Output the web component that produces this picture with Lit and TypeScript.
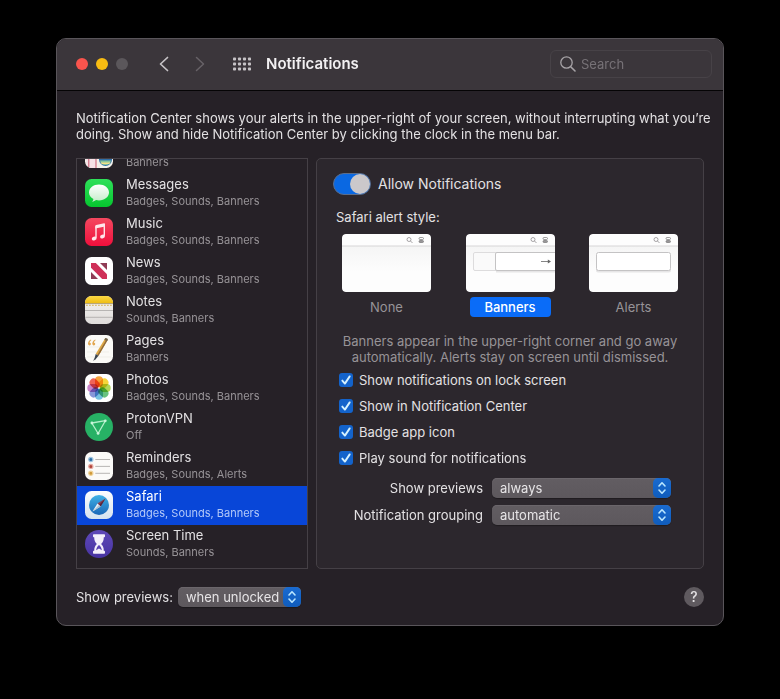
import { LitElement, html, css, svg, nothing, TemplateResult } from "lit";
import { customElement, property, state } from "lit/decorators.js";
import { classMap } from "lit/directives/class-map.js";

interface AppEntry {
  id: string;
  name: string;
  detail: string;
}

const APPS: AppEntry[] = [
  { id: "maps", name: "", detail: "Banners" },
  { id: "messages", name: "Messages", detail: "Badges, Sounds, Banners" },
  { id: "music", name: "Music", detail: "Badges, Sounds, Banners" },
  { id: "news", name: "News", detail: "Badges, Sounds, Banners" },
  { id: "notes", name: "Notes", detail: "Sounds, Banners" },
  { id: "pages", name: "Pages", detail: "Banners" },
  { id: "photos", name: "Photos", detail: "Badges, Sounds, Banners" },
  { id: "protonvpn", name: "ProtonVPN", detail: "Off" },
  { id: "reminders", name: "Reminders", detail: "Badges, Sounds, Alerts" },
  { id: "safari", name: "Safari", detail: "Badges, Sounds, Banners" },
  { id: "screentime", name: "Screen Time", detail: "Sounds, Banners" },
];

const PETALS = ["#f7941d", "#f3cf1a", "#a5cf3b", "#4fb86a", "#5fb8dc", "#7386d2", "#c06fc0", "#ee4b3c"];

const gradient = (id: string, from: string, to: string) => svg`
  <linearGradient id=${id} x1="0" y1="0" x2="0" y2="1">
    <stop offset="0" stop-color=${from}></stop>
    <stop offset="1" stop-color=${to}></stop>
  </linearGradient>`;

const tile = (fill: string) => svg`<rect width="28" height="28" rx="6.5" fill=${fill}></rect>`;

const ICONS: Record<string, () => TemplateResult> = {
  maps: () => svg`
    ${tile("#f3f1ea")}
    <path d="M1 18h10v10H6.500A6.500 6.500 0 0 1 1 24z" fill="#f6e3e7"></path>
    <path d="M3.800 18v9M11 18v10" stroke="#c9566c" stroke-width="1"></path>
    <circle cx="20.500" cy="19.500" r="6.500" fill="#2f6fa8"></circle>
    <path d="M15 20.500h11a5.600 5.600 0 0 1-11 0z" fill="#8cc79a"></path>
    <path d="M15.500 22.500h10a5.600 5.600 0 0 1-1.500 1.500h-7z" fill="#f2e08b"></path>`,
  messages: () => svg`
    <defs>${gradient("msg", "#2fe05a", "#06c62f")}${gradient("bub", "#ffffff", "#c4ecc9")}</defs>
    ${tile("url(#msg)")}
    <path d="M14 5.600c5.600 0 10 3.500 10 7.900s-4.400 7.900-10 7.900c-1 0-2-.1-2.900-.3-1 .9-2.400 1.500-4 1.700.8-.8 1.200-1.700 1.300-2.800C5.700 18.600 4 16.200 4 13.500c0-4.400 4.400-7.900 10-7.900z" fill="url(#bub)"></path>`,
  music: () => svg`
    <defs>${gradient("mus", "#f4485f", "#f00f3c")}</defs>
    ${tile("url(#mus)")}
    <path d="M11 8.200v11.600M19.300 6.500v11.300" stroke="#ffe6ea" stroke-width="1.400" fill="none"></path>
    <path d="M10.300 8c0-.6.3-1 .9-1.100l7.900-1.700c.6-.1.9.2.9.8v2.500l-9.700 2z" fill="#ffe6ea"></path>
    <ellipse cx="9.200" cy="20.500" rx="2.500" ry="1.900" transform="rotate(-18 9.200 20.500)" fill="#ffe6ea"></ellipse>
    <ellipse cx="17.500" cy="18.500" rx="2.500" ry="1.900" transform="rotate(-18 17.500 18.500)" fill="#ffe6ea"></ellipse>`,
  news: () => svg`
    ${tile("#ffffff")}
    <path d="M6 6h4.800L22 17.200V22h-4.800L6 10.800z" fill="#cf3058"></path>
    <path d="M15 6h7v7z" fill="#8f3b55"></path>
    <path d="M6 15v7h7z" fill="#8f3b55"></path>`,
  notes: () => svg`
    <defs>${gradient("note", "#f6f4f1", "#dfdcdb")}${gradient("noteTop", "#fbd845", "#efbd12")}</defs>
    ${tile("url(#note)")}
    <path d="M0 7.300V6.500A6.500 6.500 0 0 1 6.500 0h15A6.500 6.500 0 0 1 28 6.500v.8z" fill="url(#noteTop)"></path>
    <path d="M0 7.600h28" stroke="#96824c" stroke-width=".7"></path>
    <path d="M1 9.300h26" stroke="#d3ad4b" stroke-width=".9" stroke-dasharray="1.800 1.200"></path>
    <path d="M0 14.500h28M0 21.300h28" stroke="#aaa7a6" stroke-width=".8"></path>`,
  pages: () => svg`
    ${tile("#fbfaf7")}
    <path d="M2 12h17M2 17h22M2 22h24" stroke="#ece9e3" stroke-width=".7"></path>
    <path d="M6 4.500C4 5.500 3 7 3 8.600c0 1.100.6 1.800 1.500 1.800.8 0 1.400-.6 1.400-1.300 0-.8-.5-1.300-1.300-1.300.1-1 .7-1.800 1.700-2.500zM10.300 4.500c-2 1-3 2.500-3 4.100 0 1.100.6 1.800 1.500 1.800.8 0 1.400-.6 1.400-1.300 0-.8-.5-1.300-1.300-1.300.1-1 .7-1.800 1.700-2.500z" fill="#e2a750"></path>
    <path d="M20.200 3.200l2.600 1.500-9.300 16-2.800-1.600z" fill="#dda845"></path>
    <path d="M21.700 4.100l1.100.6-9.300 16-1.200-.7z" fill="#8f6a3c"></path>
    <path d="M20.200 3.200c.5-.9 3.200.6 2.600 1.500l-.9 1.500-2.600-1.500z" fill="#77684f"></path>
    <path d="M10.700 19.100l2.800 1.600-3.300 4.100c-.4.400-1 .1-.9-.5z" fill="#39434e"></path>
    <path d="M8.700 25.500l1.300-2.200" stroke="#39434e" stroke-width=".8"></path>`,
  photos: () => svg`
    ${tile("#ffffff")}
    <g class="petals">
      ${PETALS.map(
        (color, i) => svg`
        <rect x="10" y="2.300" width="8" height="10.900" rx="4" fill=${color} fill-opacity=".86"
          transform="rotate(${i * 45} 14 14)"></rect>`
      )}
    </g>`,
  protonvpn: () => svg`
    <circle cx="14" cy="14" r="14" fill="#27b165"></circle>
    <path d="M6.800 10l13.600-2.300-7.300 12.800z" fill="none" stroke="#b4efca" stroke-width="1.300" stroke-linejoin="round"></path>
    <circle cx="6.900" cy="10" r="1.400" fill="#c9f5da"></circle>
    <circle cx="20.300" cy="7.800" r="1.400" fill="#c9f5da"></circle>
    <circle cx="13.100" cy="20.400" r="1.400" fill="#c9f5da"></circle>`,
  reminders: () => svg`
    ${tile("#fbfaf8")}
    <circle cx="5.800" cy="7.500" r="2.100" fill="#2c6ca4" stroke="#9dc3df" stroke-width="1.200"></circle>
    <circle cx="5.800" cy="14.400" r="2.100" fill="#b0453a" stroke="#e6aaa2" stroke-width="1.200"></circle>
    <circle cx="5.800" cy="21.300" r="2.100" fill="#d09a3a" stroke="#efd39a" stroke-width="1.200"></circle>
    <path d="M10.300 7.500h14.700M10.300 14.400h14.700M10.300 21.300h14.700" stroke="#b0aeac" stroke-width=".9"></path>`,
  safari: () => svg`
    <defs>${gradient("saf", "#3fb2e6", "#1b67b8")}${gradient("safTile", "#fbfdff", "#d5e2ef")}</defs>
    ${tile("url(#safTile)")}
    <circle cx="14" cy="14" r="10" fill="url(#saf)"></circle>
    <path d="M20.500 7.500l-4.900 8.100-3.200-3.200z" fill="#8d3f52"></path>
    <path d="M20.500 7.500l-4.900 8.100-1.600-1.600z" fill="#52283f"></path>
    <path d="M7.500 20.500l4.900-8.100 3.200 3.200z" fill="#e6eff6"></path>
    <path d="M7.500 20.500l6.500-6.500 1.600 1.600z" fill="#aebfd0"></path>`,
  screentime: () => svg`
    <defs>${gradient("scr", "#5f49b8", "#4733a2")}</defs>
    <circle cx="14" cy="14" r="14" fill="url(#scr)"></circle>
    <path d="M9 4.200h10c.6 0 1 .4 1 1v1c0 .6-.4 1-1 1h-.2c0 3.200-1 5.200-2.700 6.800 1.700 1.600 2.700 3.600 2.700 6.800h.2c.6 0 1 .4 1 1v1c0 .6-.4 1-1 1H9c-.6 0-1-.4-1-1v-1c0-.6.4-1 1-1h.2c0-3.200 1-5.200 2.700-6.800-1.700-1.600-2.700-3.600-2.700-6.800H9c-.6 0-1-.4-1-1v-1c0-.6.4-1 1-1z" fill="#f4f0fb"></path>
    <path d="M14 15c1.600 1.300 2.600 3 2.900 5.300L14 18.500l-2.900 1.800c.3-2.300 1.300-4 2.900-5.300z" fill="#5a42b4"></path>`,
};

@customElement("app-icon")
export class AppIcon extends LitElement {
  @property() name = "";

  static styles = css`
    :host {
      display: block;
      width: 28px;
      height: 28px;
    }
    .icon {
      display: block;
      width: 100%;
      height: 100%;
    }
    .petals rect {
      mix-blend-mode: multiply;
    }
  `;

  render() {
    return html`<svg class="icon" viewBox="0 0 28 28" aria-hidden="true">${ICONS[this.name]?.() ?? nothing}</svg>`;
  }
}

@customElement("popup-menu")
export class PopupMenu extends LitElement {
  @property() label = "";
  @property({ type: Array }) options: string[] = [];

  static styles = css`
    :host {
      display: contents;
    }
    .label {
      text-align: right;
    }
    .field {
      display: grid;
      height: 20px;
      border-radius: 5px;
      background: linear-gradient(#625d62, #5d585d);
      box-shadow: 0 1px 1px rgba(0, 0, 0, 0.3), inset 0 1px 0 #6b666b;
    }
    .select,
    .stepper {
      grid-area: 1 / 1;
    }
    .select {
      appearance: none;
      width: 100%;
      min-width: 0;
      margin: 0;
      padding: 0 18px 1px 8px;
      border: 0;
      border-radius: 5px;
      background: transparent;
      color: #e6e4e6;
      font: inherit;
      line-height: 16px;
    }
    .select option {
      color: #222;
    }
    .stepper {
      justify-self: end;
      width: 18px;
      height: 20px;
      border-radius: 5px;
      background: linear-gradient(#1a6bd0, #0f5cbc);
      pointer-events: none;
    }
  `;

  render() {
    return html`
      <label class="label" for="menu">${this.label}</label>
      <span class="field">
        <select id="menu" class="select">
          ${this.options.map((o) => html`<option>${o}</option>`)}
        </select>
        <svg class="stepper" viewBox="0 0 18 20" aria-hidden="true">
          <path d="M6 8l3-3.200L12 8M6 12l3 3.200L12 12" fill="none" stroke="#b9e6ff" stroke-width="1.600"
            stroke-linecap="round" stroke-linejoin="round"></path>
        </svg>
      </span>
    `;
  }
}

@customElement("app-root")
export class AppRoot extends LitElement {
  @state() private selected = "safari";
  @state() private alertStyle = "Banners";

  static styles = css`
    :host {
      display: block;
      box-sizing: border-box;
      min-height: 100vh;
      padding: 38px 56px;
      background: #000;
      color: #e3e1e3;
      font: 13px/16px Inter, "Liberation Sans", sans-serif;
    }
    * {
      box-sizing: border-box;
    }
    button,
    input {
      margin: 0;
      padding: 0;
      border: 0;
      background: none;
      color: inherit;
      font: inherit;
    }
    .window {
      overflow: hidden;
      border: 1px solid #59555a;
      border-radius: 10px;
      background: #262127;
    }
    .titlebar {
      display: flex;
      align-items: center;
      height: 52px;
      padding: 0 11px 1px 19px;
      border-bottom: 1px solid #050405;
      background: #3b363b;
    }
    .lights {
      display: flex;
      gap: 8px;
      margin-right: 22px;
    }
    .light {
      width: 12px;
      height: 12px;
      border-radius: 50%;
    }
    .close {
      background: #f9544d;
    }
    .minimise {
      background: #f8bc12;
    }
    .zoom {
      background: #5b575b;
    }
    .nav {
      display: flex;
      gap: 8px;
      margin-right: 14px;
    }
    .tool {
      display: grid;
      place-items: center;
      width: 28px;
      height: 28px;
      color: #c6c3c6;
    }
    .tool:disabled {
      color: #676267;
    }
    .title {
      flex: 1;
      margin: 0 0 0 10px;
      color: #f2f0f2;
      font-size: 15px;
      font-weight: 600;
      line-height: 20px;
    }
    .search {
      display: flex;
      align-items: center;
      gap: 5px;
      width: 162px;
      height: 28px;
      padding: 0 9px;
      border: 1px solid #474247;
      border-radius: 6px;
      color: #a7a3a7;
    }
    .search-input {
      flex: 1;
      min-width: 0;
      outline: none;
    }
    .search-input::placeholder {
      color: #777277;
      opacity: 1;
    }
    .body {
      padding: 19px 19px 18px;
    }
    .intro {
      margin: 0 -16px 16px 0;
    }
    .columns {
      display: grid;
      grid-template-columns: 58fr 97fr;
      gap: 8px;
    }
    .apps {
      contain: size;
      display: flex;
      flex-direction: column;
      justify-content: flex-end;
      overflow: hidden;
      margin: 0;
      padding: 0 0 4px;
      border: 1px solid #454046;
      list-style: none;
    }
    .entry {
      flex: none;
    }
    .row {
      display: flex;
      align-items: flex-start;
      gap: 13px;
      width: 100%;
      height: 39px;
      padding: 5px 8px 0;
      text-align: left;
    }
    .row.on {
      background: #0846d8;
      color: #fff;
    }
    .texts {
      display: grid;
      grid-template-rows: 16px 16px;
      margin-top: -3px;
    }
    .detail {
      grid-row: 2;
      color: #979397;
      font-size: 11px;
      line-height: 18px;
    }
    .on .detail {
      color: #b3c9f8;
    }
    .panel {
      padding: 14px 0 43px;
      border: 1px solid #454046;
      border-radius: 5px;
      background: #2c272d;
    }
    .allow {
      display: flex;
      align-items: center;
      gap: 7px;
      padding-left: 16px;
      font-size: 14px;
    }
    .switch {
      appearance: none;
      display: flex;
      width: 38px;
      height: 22px;
      border: 1px solid #5a6d8c;
      border-radius: 11px;
      background: #56525a;
    }
    .switch::before {
      content: "";
      width: 20px;
      height: 100%;
      border-radius: 10px;
      background: #cbc8cb;
    }
    .switch:checked {
      justify-content: flex-end;
      background: #0a68e2;
    }
    .styles {
      margin: 0;
      padding: 0 25px;
      border: 0;
    }
    .legend {
      margin-left: -6px;
      padding: 14px 0 9px;
    }
    .choices {
      display: flex;
      justify-content: space-between;
    }
    .choice {
      display: grid;
      gap: 5px;
      justify-items: center;
      color: #979397;
    }
    .radio {
      appearance: none;
      position: absolute;
    }
    .thumb {
      display: block;
      width: 89px;
      height: 58px;
      border-radius: 4px;
    }
    .caption {
      width: 81px;
      border-radius: 4px;
      line-height: 20px;
      text-align: center;
    }
    .choice.on .caption {
      background: #0a6cf8;
      color: #fff;
      font-weight: 500;
    }
    .hint {
      margin: 16px 25px 7px;
      color: #979397;
      text-align: center;
      text-wrap: balance;
    }
    .checks {
      display: grid;
      gap: 10px;
      justify-items: start;
      padding-left: 22px;
    }
    .check {
      display: flex;
      align-items: center;
      gap: 6px;
    }
    .tick {
      display: grid;
    }
    .box,
    .mark {
      grid-area: 1 / 1;
      width: 14px;
      height: 14px;
    }
    .box {
      appearance: none;
      border-radius: 3px;
      background: #5d585d;
    }
    .box:checked {
      background: #1363cb;
    }
    .mark {
      visibility: hidden;
      pointer-events: none;
    }
    .box:checked + .mark {
      visibility: visible;
    }
    .menus {
      display: grid;
      grid-template-columns: 1fr 179px;
      gap: 7px 9px;
      align-items: center;
      padding: 12px 32px 0 0;
    }
    .footer {
      display: grid;
      grid-template-columns: auto 123px 1fr;
      align-items: center;
      gap: 5px;
      padding-top: 18px;
    }
    .help {
      justify-self: end;
      width: 20px;
      height: 20px;
      border-radius: 50%;
      background: #5f5a5f;
      font-size: 14px;
      font-weight: 500;
      line-height: 20px;
    }
  `;

  private thumb(kind: string) {
    return html`
      <svg class="thumb" viewBox="0 0 89 58" aria-hidden="true">
        <defs>${gradient("desk", "#f5f5f5", "#fdfdfd")}</defs>
        <rect width="89" height="58" rx="3" fill="#fdfdfd"></rect>
        <path d="M0 12h89v26H0z" fill="url(#desk)"></path>
        <path d="M0 12h89" stroke="#d6d5d6" stroke-width="1"></path>
        <circle cx="67" cy="5.500" r="2" fill="none" stroke="#828082" stroke-width=".7"></circle>
        <path d="M68.500 7l2 2" stroke="#828082" stroke-width=".7"></path>
        <rect x="77" y="3.500" width="4.500" height="2" rx="1" fill="none" stroke="#777577" stroke-width=".7"></rect>
        <rect x="77" y="6.500" width="4.500" height="2" rx="1" fill="#999799" stroke="#777577" stroke-width=".7"></rect>
        ${kind === "Banners"
          ? svg`
            <rect x="7.500" y="18.500" width="40" height="18" rx="1.500" fill="#fafafa" stroke="#dddcdd"></rect>
            <path d="M89 37.500H30" stroke="#e6e5e6" stroke-width="2"></path>
            <path d="M89 18.500H31q-1.500 0-1.500 1.500v15q0 1.500 1.500 1.500h58" fill="#fff" stroke="#c4c3c4"></path>
            <path d="M75 27.500h8.500" stroke="#666" stroke-width=".8"></path>
            <path d="M81.800 25.500l3.200 2-3.200 2z" fill="#666"></path>`
          : nothing}
        ${kind === "Alerts"
          ? svg`
            <rect x="7" y="20" width="75" height="18.500" rx="2" fill="#e6e5e6"></rect>
            <rect x="7.500" y="18.500" width="74" height="18" rx="2" fill="#fff" stroke="#c4c3c4"></rect>`
          : nothing}
      </svg>
    `;
  }

  private check(label: string) {
    return html`
      <label class="check">
        <span class="tick">
          <input class="box" type="checkbox" checked />
          <svg class="mark" viewBox="0 0 14 14" aria-hidden="true">
            <path d="M3.300 7.600l2.600 3L10.700 3.400" fill="none" stroke="#d5f1ff" stroke-width="1.900"
              stroke-linecap="round" stroke-linejoin="round"></path>
          </svg>
        </span>
        ${label}
      </label>
    `;
  }

  render() {
    return html`
      <main class="window">
        <header class="titlebar">
          <div class="lights">
            <button class="light close" aria-label="Close"></button>
            <button class="light minimise" aria-label="Minimise"></button>
            <button class="light zoom" aria-label="Zoom" disabled></button>
          </div>
          <nav class="nav">
            <button class="tool" aria-label="Back">
              <svg width="10" height="16" viewBox="0 0 10 16">
                <path d="M8.500 1.500L1.500 8l7 6.500" fill="none" stroke="currentColor" stroke-width="1.700"
                  stroke-linecap="round" stroke-linejoin="round"></path>
              </svg>
            </button>
            <button class="tool" aria-label="Forward" disabled>
              <svg width="10" height="16" viewBox="0 0 10 16">
                <path d="M1.500 1.500l7 6.500-7 6.500" fill="none" stroke="currentColor" stroke-width="1.500"
                  stroke-linecap="round" stroke-linejoin="round"></path>
              </svg>
            </button>
          </nav>
          <button class="tool" aria-label="Show all">
            <svg width="18" height="14" viewBox="0 0 18 14" fill="currentColor">
              ${[0, 1, 2, 3].map((c) =>
                [0, 1, 2].map(
                  (r) => svg`<rect x=${c * 5} y=${r * 5 + 0.5} width="3" height="3" rx=".8"></rect>`
                )
              )}
            </svg>
          </button>
          <h1 class="title">Notifications</h1>
          <label class="search">
            <svg width="16" height="16" viewBox="0 0 16 16" aria-hidden="true">
              <circle cx="6.500" cy="6.500" r="5.700" fill="none" stroke="currentColor" stroke-width="1.300"></circle>
              <path d="M10.700 10.700l4.300 4.300" stroke="currentColor" stroke-width="1.600" stroke-linecap="round"></path>
            </svg>
            <input class="search-input" type="text" placeholder="Search" aria-label="Search" />
          </label>
        </header>

        <div class="body">
          <p class="intro">
            Notification Center shows your alerts in the upper-right of your screen, without interrupting what you’re
            doing. Show and hide Notification Center by clicking the clock in the menu bar.
          </p>

          <div class="columns">
            <ul class="apps">
              ${APPS.map(
                (app) => html`
                  <li class="entry">
                    <button
                      class=${classMap({ row: true, on: app.id === this.selected })}
                      aria-current=${app.id === this.selected ? "true" : "false"}
                      @click=${() => (this.selected = app.id)}
                    >
                      <app-icon name=${app.id}></app-icon>
                      <span class="texts">
                        ${app.name ? html`<span class="name">${app.name}</span>` : nothing}
                        <span class="detail">${app.detail}</span>
                      </span>
                    </button>
                  </li>
                `
              )}
            </ul>

            <section class="panel">
              <label class="allow">
                <input class="switch" type="checkbox" role="switch" checked />
                Allow Notifications
              </label>

              <fieldset class="styles">
                <legend class="legend">Safari alert style:</legend>
                <div class="choices">
                  ${["None", "Banners", "Alerts"].map(
                    (kind) => html`
                      <label class=${classMap({ choice: true, on: kind === this.alertStyle })}>
                        <input
                          class="radio"
                          type="radio"
                          name="style"
                          .checked=${kind === this.alertStyle}
                          @change=${() => (this.alertStyle = kind)}
                        />
                        ${this.thumb(kind)}
                        <span class="caption">${kind}</span>
                      </label>
                    `
                  )}
                </div>
              </fieldset>

              <p class="hint">
                Banners appear in the upper-right corner and go away automatically. Alerts stay on screen until
                dismissed.
              </p>

              <div class="checks">
                ${this.check("Show notifications on lock screen")} ${this.check("Show in Notification Center")}
                ${this.check("Badge app icon")} ${this.check("Play sound for notifications")}
              </div>

              <div class="menus">
                <popup-menu label="Show previews" .options=${["always", "when unlocked", "never"]}></popup-menu>
                <popup-menu label="Notification grouping" .options=${["automatic", "by app", "off"]}></popup-menu>
              </div>
            </section>
          </div>

          <footer class="footer">
            <popup-menu label="Show previews:" .options=${["when unlocked", "always", "never"]}></popup-menu>
            <button class="help" aria-label="Help">?</button>
          </footer>
        </div>
      </main>
    `;
  }
}
